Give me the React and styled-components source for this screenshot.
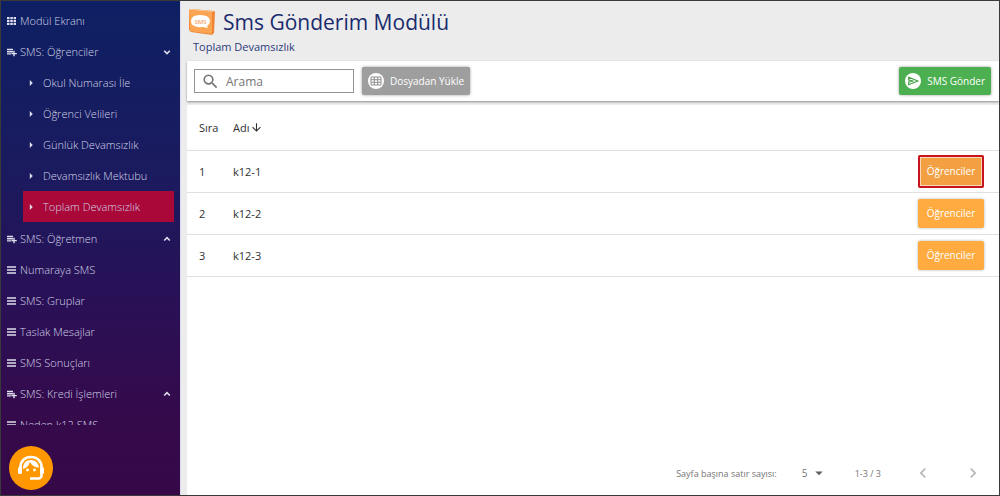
import React, { useState } from "react";
import styled, { createGlobalStyle } from "styled-components";
import {
  MdArrowDownward,
  MdArrowDropDown,
  MdArrowRight,
  MdChevronLeft,
  MdChevronRight,
  MdSearch,
} from "react-icons/md";

const GridIcon = () => (
  <svg width="11" height="12" viewBox="0 0 11 12" aria-hidden="true">
    <path
      d="M1 2h2.500v2.200H1zM4.300 2h2.500v2.200H4.300zM7.600 2h2.400v2.200H7.600zM1 4.900h2.500v2.200H1zM4.300 4.900h2.500v2.200H4.300zM7.600 4.900h2.400v2.200H7.600zM1 7.800h2.500V10H1zM4.300 7.800h2.500V10H4.300zM7.600 7.800h2.400V10H7.600z"
      fill="currentColor"
    />
  </svg>
);

const AddListIcon = () => (
  <svg width="11" height="12" viewBox="0 0 11 12" aria-hidden="true">
    <path
      d="M1 3.500h6M1 5.700h6M1 7.900h4M8 4.800v5.400M5.400 7.600h5.400"
      fill="none"
      stroke="currentColor"
      strokeWidth="1.400"
    />
  </svg>
);

const ListIcon = () => (
  <svg width="11" height="12" viewBox="0 0 11 12" aria-hidden="true">
    <path d="M1 3h9M1 6h9M1 9h9" fill="none" stroke="currentColor" strokeWidth="1.500" />
  </svg>
);

const Arrow = ({ open }) => (
  <svg width="8" height="8" viewBox="0 0 8 8" aria-hidden="true">
    <path
      d={open ? "M1.200 2.700 4 5.500 6.800 2.700" : "M1.200 5.500 4 2.700 6.800 5.500"}
      fill="none"
      stroke="currentColor"
      strokeWidth="1.600"
    />
  </svg>
);

const menu = [
  { title: "Modül Ekranı", icon: <GridIcon /> },
  {
    title: "SMS: Öğrenciler",
    icon: <AddListIcon />,
    open: true,
    items: [
      "Okul Numarası İle",
      "Öğrenci Velileri",
      "Günlük Devamsızlık",
      "Devamsızlık Mektubu",
      "Toplam Devamsızlık",
    ],
  },
  { title: "SMS: Öğretmen", icon: <AddListIcon />, open: false },
  { title: "Numaraya SMS", icon: <ListIcon /> },
  { title: "SMS: Gruplar", icon: <ListIcon /> },
  { title: "Taslak Mesajlar", icon: <ListIcon /> },
  { title: "SMS Sonuçları", icon: <ListIcon /> },
  { title: "SMS: Kredi İşlemleri", icon: <AddListIcon />, open: false },
  { title: "Neden k12 SMS", icon: <ListIcon /> },
];

const rows = [
  { id: 1, name: "k12-1" },
  { id: 2, name: "k12-2" },
  { id: 3, name: "k12-3" },
];

function SmsLogo() {
  return (
    <svg width="27" height="28" viewBox="0 0 27 28" aria-hidden="true">
      <path d="M1 2 3 1 26 3 27 4 26 25 24 27 3 24 1 22Z" fill="#f08436" />
      <path d="M1 2 24 4 24 26 2 23Z" fill="#fba552" />
      <path d="M1 2 3 1 26 3 24 4Z" fill="#fbc48d" />
      <path d="M3 13Q3 7 12 7Q22 7 22 13Q22 16 19 18L20 20 15 19Q3 20 3 13Z" fill="#fff" />
      <text
        x="12.500"
        y="15.500"
        textAnchor="middle"
        fontFamily="Open Sans, sans-serif"
        fontSize="6"
        fontWeight="600"
        fill="#f6a465"
      >
        SMS
      </text>
    </svg>
  );
}

function GridBadge() {
  return (
    <svg width="16" height="16" viewBox="0 0 16 16" aria-hidden="true">
      <circle cx="8" cy="8" r="8" fill="#fff" />
      <path
        d="M3 4h10v8H3zM3 6.700h10M3 9.300h10M6.300 4v8M9.700 4v8"
        fill="none"
        stroke="#8e8e8e"
      />
    </svg>
  );
}

function SendBadge() {
  return (
    <svg width="16" height="16" viewBox="0 0 16 16" aria-hidden="true">
      <circle cx="8" cy="8" r="8" fill="#fff" />
      <path
        d="M3.700 4.300 12.800 8 3.700 11.700V9L8.500 8 3.700 7Z"
        fill="none"
        stroke="#43a047"
        strokeWidth="1.200"
      />
    </svg>
  );
}

function SupportIcon() {
  return (
    <svg width="28" height="26" viewBox="0 0 28 26" aria-hidden="true">
      <path
        d="M3.500 13.500V12C3.500 6 8 2 14 2s10.500 4 10.500 10v8.500a3 3 0 0 1-3 3H13"
        fill="none"
        stroke="#fff"
        strokeWidth="2.600"
      />
      <rect x="1" y="12" width="4" height="7" rx="1.500" fill="#fff" />
      <rect x="23" y="12" width="4" height="7" rx="1.500" fill="#fff" />
      <path
        d="M6 14C6 8 9 5 14 5c4.500 0 7.500 3 8 7.500-4 0-7.500-2-9.200-5.500C12 10.500 9.500 13 6 14Z"
        fill="#fff"
      />
      <circle cx="10.500" cy="15" r="1.400" fill="#fff" />
      <circle cx="17.500" cy="15" r="1.400" fill="#fff" />
    </svg>
  );
}

function Sidebar() {
  const [active, setActive] = useState("Toplam Devamsızlık");
  return (
    <Side>
      <Nav>
        {menu.map((m) => (
          <React.Fragment key={m.title}>
            <NavLink href="#">
              {m.icon}
              <Grow>{m.title}</Grow>
              {m.open !== undefined && <Arrow open={m.open} />}
            </NavLink>
            {m.items && (
              <SubMenu>
                {m.items.map((s) => (
                  <SubLink
                    key={s}
                    href="#"
                    $active={s === active}
                    onClick={() => setActive(s)}
                  >
                    <MdArrowRight />
                    {s}
                  </SubLink>
                ))}
              </SubMenu>
            )}
          </React.Fragment>
        ))}
      </Nav>
      <SideFooter>
        <Support aria-label="Destek">
          <SupportIcon />
        </Support>
      </SideFooter>
    </Side>
  );
}

function App() {
  return (
    <Page>
      <Global />
      <Sidebar />
      <Main>
        <Header>
          <TitleRow>
            <SmsLogo />
            <Title>Sms Gönderim Modülü</Title>
          </TitleRow>
          <SubTitle>Toplam Devamsızlık</SubTitle>
        </Header>
        <Toolbar>
          <SearchBox>
            <MdSearch />
            <input type="text" placeholder="Arama" aria-label="Arama" />
          </SearchBox>
          <Button $color="#9e9e9e">
            <GridBadge />
            Dosyadan Yükle
          </Button>
          <Spacer />
          <Button $color="#4caf50">
            <SendBadge />
            SMS Gönder
          </Button>
        </Toolbar>
        <Card>
          <Table>
            <thead>
              <tr>
                <NumberHead>Sıra</NumberHead>
                <th>
                  <Sort>
                    Adı
                    <MdArrowDownward />
                  </Sort>
                </th>
                <th aria-label="İşlem" />
              </tr>
            </thead>
            <tbody>
              {rows.map((r, i) => (
                <tr key={r.id}>
                  <td>{r.id}</td>
                  <td>{r.name}</td>
                  <ActionCell>
                    <RowButton $marked={i === 0}>Öğrenciler</RowButton>
                  </ActionCell>
                </tr>
              ))}
            </tbody>
          </Table>
          <Pager>
            <label htmlFor="size">Sayfa başına satır sayısı:</label>
            <SizeSelect>
              <select id="size" defaultValue="5">
                <option>5</option>
                <option>10</option>
                <option>25</option>
              </select>
              <MdArrowDropDown />
            </SizeSelect>
            <Range>1-3 / 3</Range>
            <PageButton disabled aria-label="Önceki">
              <MdChevronLeft />
            </PageButton>
            <PageButton disabled aria-label="Sonraki">
              <MdChevronRight />
            </PageButton>
          </Pager>
        </Card>
      </Main>
    </Page>
  );
}

const Global = createGlobalStyle`
  * {
    box-sizing: border-box;
  }
  body {
    margin: 0;
    font-family: "Open Sans", "Noto Sans", sans-serif;
    font-size: 11px;
  }
  button, input, select {
    font-family: inherit;
  }
`;
const Page = styled.div`
  display: flex;
  height: 100vh;
  border: 1px solid #3a3a3a;
  background: #ececec;
`;
const Side = styled.aside`
  display: flex;
  flex-direction: column;
  flex: 0 0 179px;
  background: linear-gradient(#0d2063, #1b1a5e 35%, #2c0f55 65%, #350a4b 85%, #360848);
`;
const Nav = styled.nav`
  flex: 1;
  min-height: 0;
  overflow: hidden;
  padding-top: 4px;
`;
const NavLink = styled.a`
  display: flex;
  align-items: center;
  gap: 3px;
  height: 31px;
  padding: 0 9px 0 5px;
  color: #d2d2e6;
  font-weight: 300;
  text-decoration: none;
  svg {
    color: #dedeec;
  }
`;
const Grow = styled.span`
  flex: 1;
`;
const SubMenu = styled.div`
  padding: 0 6px 1px 22px;
`;
const SubLink = styled(NavLink)`
  gap: 5px;
  padding: 0 0 0 1px;
  background: ${(props) => (props.$active ? "#a90839" : "transparent")};
  svg {
    font-size: 14px;
  }
`;
const SideFooter = styled.div`
  height: 70px;
  padding: 21px 8px 0;
`;
const Support = styled.button`
  display: flex;
  align-items: center;
  justify-content: center;
  width: 44px;
  height: 44px;
  padding: 0;
  border: 0;
  border-radius: 50%;
  background: #ff9800;
`;
const Main = styled.main`
  display: flex;
  flex-direction: column;
  flex: 1;
  min-width: 0;
  gap: 4px;
  padding-left: 6px;
  border-left: 1px solid #dcdcf0;
`;
const Header = styled.header`
  height: 56px;
  padding: 6px 0 0 1px;
`;
const TitleRow = styled.div`
  display: flex;
  align-items: center;
  gap: 8px;
  height: 29px;
`;
const Title = styled.h1`
  margin: 0;
  color: #1a2a6c;
  font-size: 21px;
  font-weight: 400;
`;
const SubTitle = styled.div`
  padding-left: 5px;
  color: #2c3a7c;
  line-height: 22px;
`;
const Toolbar = styled.section`
  display: flex;
  align-items: center;
  gap: 8px;
  height: 40px;
  padding: 0 8px 0 7px;
  background: #fff;
  box-shadow: 0 1px 2px rgba(0, 0, 0, 0.4);
`;
const SearchBox = styled.div`
  display: flex;
  align-items: center;
  width: 160px;
  height: 24px;
  padding: 0 6px;
  border: 1px solid #949494;
  svg {
    flex: none;
    color: #757575;
    font-size: 19px;
  }
  input {
    width: 100%;
    min-width: 0;
    padding: 0 0 0 6px;
    border: 0;
    outline: 0;
    background: none;
    font-size: 12px;
  }
  input::placeholder {
    color: #757575;
  }
`;
const Button = styled.button`
  display: flex;
  align-items: center;
  gap: 6px;
  height: 28px;
  padding: 0 6px;
  border: 0;
  border-radius: 2px;
  background: ${(props) => props.$color};
  box-shadow: 0 0 3px rgba(0, 0, 0, 0.4);
  color: #fff;
  font-size: 10px;
  white-space: nowrap;
`;
const Spacer = styled.div`
  flex: 1;
`;
const Card = styled.section`
  display: flex;
  flex-direction: column;
  flex: 1;
  background: #fff;
`;
const Table = styled.table`
  width: 100%;
  border-collapse: collapse;
  color: #303030;
  tr {
    height: 42px;
    border-bottom: 1px solid #e0e0e0;
  }
  thead tr {
    height: 45px;
  }
  th,
  td {
    padding: 0 0 0 12px;
    font-weight: 400;
    text-align: left;
  }
`;
const NumberHead = styled.th`
  width: 34px;
`;
const Sort = styled.span`
  display: flex;
  align-items: center;
  gap: 1px;
  svg {
    font-size: 13px;
  }
`;
const ActionCell = styled.td`
  && {
    padding-right: 15px;
    text-align: right;
  }
`;
const RowButton = styled.button`
  width: 66px;
  height: ${(props) => (props.$marked ? "33px" : "29px")};
  padding: 0;
  border: 0;
  border-radius: 2px;
  background: ${(props) => (props.$marked ? "#f3a043" : "#ffab40")};
  box-shadow: ${(props) =>
    props.$marked
      ? "inset 0 0 0 2px #c8141e, inset 0 0 0 3px #f9d9b8"
      : "0 0 3px rgba(0, 0, 0, 0.3)"};
  color: #fff;
  font-size: 10px;
`;
const Pager = styled.footer`
  display: flex;
  align-items: center;
  height: 44px;
  margin-top: auto;
  padding-right: 16px;
  justify-content: flex-end;
  color: #757575;
  font-size: 9px;
`;
const SizeSelect = styled.div`
  display: flex;
  align-items: center;
  margin-left: 25px;
  select {
    width: 8px;
    padding: 0;
    border: 0;
    appearance: none;
    background: none;
    color: inherit;
    font-size: 10px;
  }
  svg {
    color: #606060;
    font-size: 18px;
  }
`;
const Range = styled.span`
  margin: 0 32px 0 27px;
`;
const PageButton = styled.button`
  display: flex;
  padding: 0;
  border: 0;
  background: none;
  color: #b5b5b5;
  font-size: 20px;
  & + & {
    margin-left: 30px;
  }
`;

export default App;
